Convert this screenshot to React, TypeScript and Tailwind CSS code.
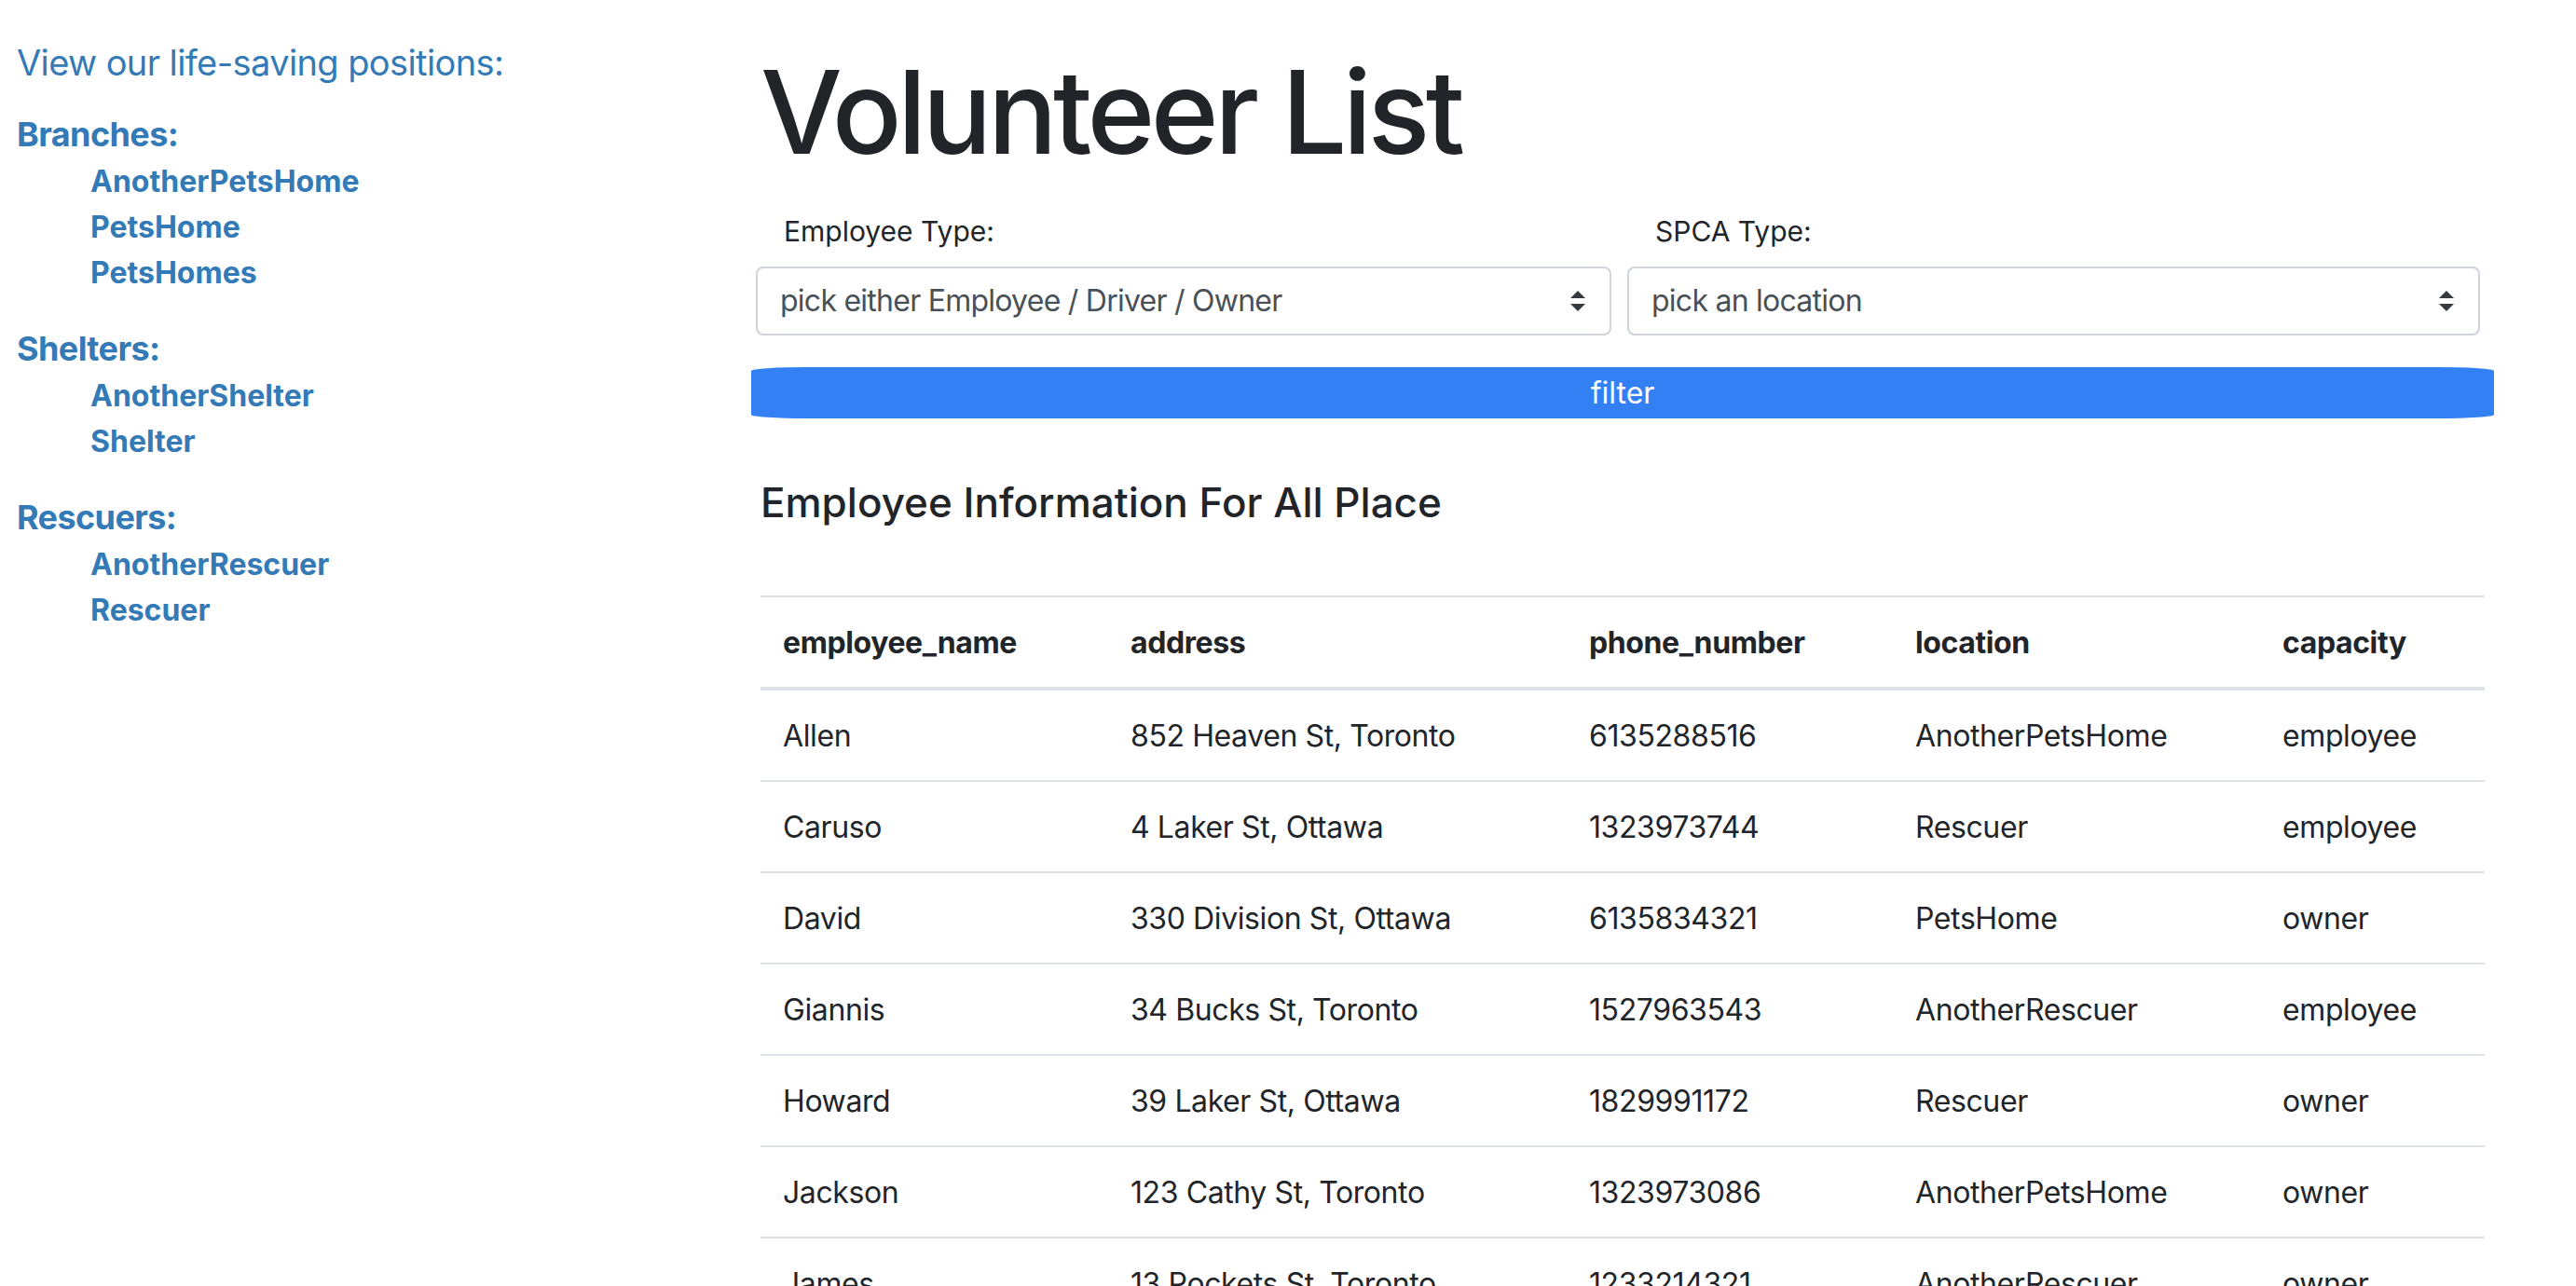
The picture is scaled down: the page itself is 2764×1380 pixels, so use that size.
import React from 'react';

const groups = [
	{ title: 'Branches:', items: ['AnotherPetsHome', 'PetsHome', 'PetsHomes'] },
	{ title: 'Shelters:', items: ['AnotherShelter', 'Shelter'] },
	{ title: 'Rescuers:', items: ['AnotherRescuer', 'Rescuer'] },
];

const columns = [
	{ key: 'employee_name', w: 'w-[373px]' },
	{ key: 'address', w: 'w-[492px]' },
	{ key: 'phone_number', w: 'w-[350px]' },
	{ key: 'location', w: 'w-[394px]' },
	{ key: 'capacity', w: 'w-[241px]' },
];

const rows = [
	['Allen', '852 Heaven St, Toronto', '6135288516', 'AnotherPetsHome', 'employee'],
	['Caruso', '4 Laker St, Ottawa', '1323973744', 'Rescuer', 'employee'],
	['David', '330 Division St, Ottawa', '6135834321', 'PetsHome', 'owner'],
	['Giannis', '34 Bucks St, Toronto', '1527963543', 'AnotherRescuer', 'employee'],
	['Howard', '39 Laker St, Ottawa', '1829991172', 'Rescuer', 'owner'],
	['Jackson', '123 Cathy St, Toronto', '1323973086', 'AnotherPetsHome', 'owner'],
	['James', '13 Pockets St, Toronto', '1233214321', 'AnotherRescuer', 'owner'],
];

function Arrows() {
	return (
		<svg width="16" height="22" viewBox="0 0 4 5.5" className="shrink-0">
			<path d="M2 0L0 2h4z M2 5.5L0 3.5h4z" fill="#343a40" />
		</svg>
	);
}

function FakeSelect({ label, text, width }: { label: string; text: string; width: string }) {
	return (
		<div className={width}>
			<div className="pl-[30px] text-[30px] leading-[45px] text-[#212529]">{label}</div>
			<div className="mt-[15px] h-[74px] border-2 border-[#ced4da] rounded-[8px] bg-white flex items-center justify-between pl-[24px] pr-[26px]">
				<span className="text-[32px] tracking-[-0.75px] text-[#495057]">{text}</span>
				<Arrows />
			</div>
		</div>
	);
}

export default function App() {
	return (
		<div className="min-h-screen bg-white flex font-['Inter','Helvetica_Neue',sans-serif] text-[#212529]">
			{/* SIDEBAR */}
			<aside className="w-[806px] shrink-0 pl-[18px] pt-[43px] text-[#337ab7]">
				<h5 className="text-[38px] leading-[48px] tracking-[-0.6px] mb-[29px]">View our life-saving positions:</h5>
				{groups.map(g => (
					<div key={g.title} className="mb-[33px]">
						<h5 className="text-[36px] leading-[48px] font-bold tracking-[-0.6px] mb-[2px]">{g.title}</h5>
						<ul className="pl-[79px]">
							{g.items.map(i => (
								<li key={i} className="text-[32px] leading-[49px] font-bold">
									{i}
								</li>
							))}
						</ul>
					</div>
				))}
			</aside>

			{/* MAIN */}
			<main className="w-[1870px] shrink-0 pt-[46px]">
				<h1 className="pl-[10px] text-[124px] leading-[1.2] font-medium tracking-[-4.5px]">Volunteer List</h1>

				<div className="mt-[31px] ml-[5px] flex gap-[17px]">
					<FakeSelect label="Employee Type:" text="pick either Employee / Driver / Owner" width="w-[918px]" />
					<FakeSelect label="SPCA Type:" text="pick an location" width="w-[915px]" />
				</div>

				<button className="mt-[34px] w-[1870px] h-[55px] pt-[2px] bg-[#3380f5] text-white text-[32px] rounded-[60px/4px]">
					filter
				</button>

				<h4 className="mt-[64px] ml-[10px] text-[44px] leading-[1.2] font-medium">Employee Information For All Place</h4>

				<table className="mt-[73px] ml-[10px] w-[1850px] border-separate border-spacing-0 text-[32px] tracking-[-0.4px]">
					<thead>
						<tr>
							{columns.map(c => (
								<th
									key={c.key}
									className={`${c.w} text-left font-bold px-[24px] pt-[25px] pb-[23px] leading-[48px] border-t-2 border-b-4 border-[#dee2e6]`}
								>
									{c.key}
								</th>
							))}
						</tr>
					</thead>
					<tbody>
						{rows.map(r => (
							<tr key={r[0]}>
								{r.map((cell, i) => (
									<td key={i} className="px-[24px] pt-[25px] pb-[23px] leading-[48px] border-b-2 border-[#dee2e6]">
										{cell}
									</td>
								))}
							</tr>
						))}
					</tbody>
				</table>
			</main>
		</div>
	);
}
